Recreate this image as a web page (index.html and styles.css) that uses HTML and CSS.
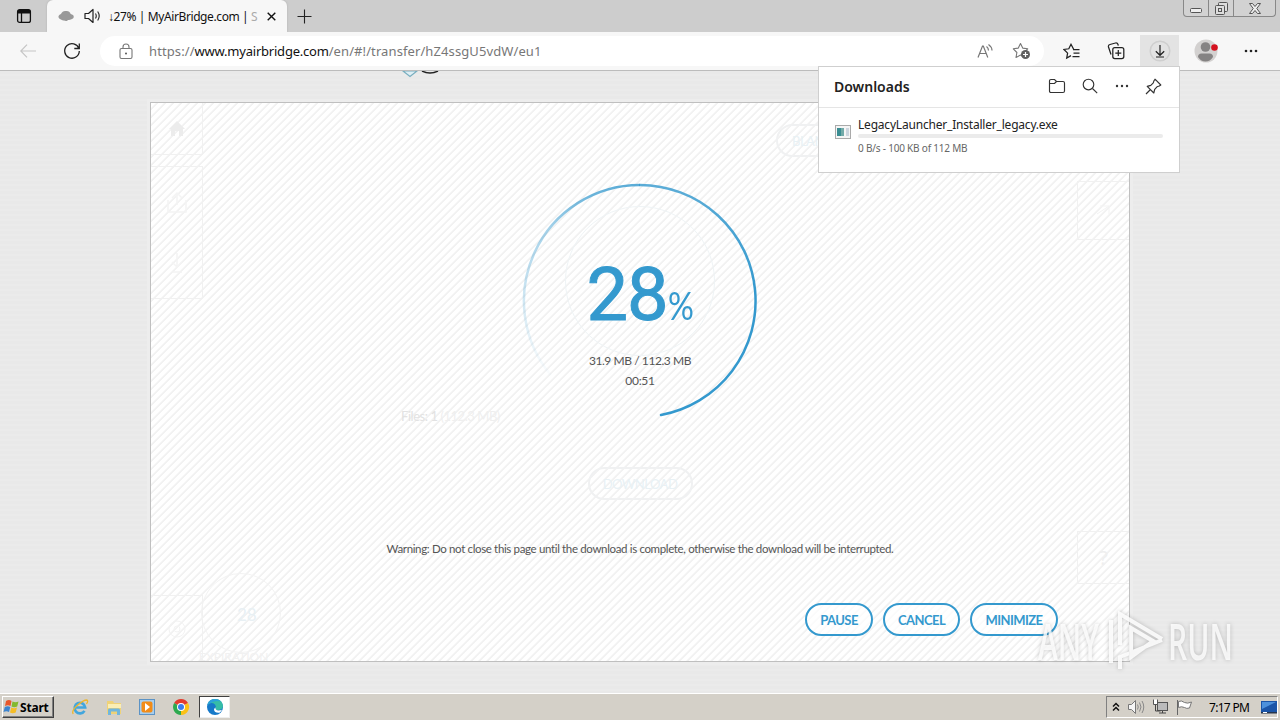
FILE: index.html
```html
<!DOCTYPE html>
<html lang="en">
<head>
  <meta charset="UTF-8">
  <title>MyAirBridge.com</title>
  <link rel="stylesheet" href="styles.css">
</head>
<body>
  <div class="screen">
    <!-- Tab strip -->
    <div class="tab-strip">
      <div class="tab-menu">
        <svg width="16" height="16" viewBox="0 0 16 16"><rect x="1.6" y="1.6" width="12.8" height="12.8" rx="2" fill="none" stroke="#111" stroke-width="1.3"/><path d="M2 2h12v3.5H2z" fill="#111"/><path d="M5.5 5v9" stroke="#111" stroke-width="1.3"/></svg>
      </div>
      <div class="tab">
        <svg class="cloud" width="16" height="12" viewBox="0 0 16 12"><path d="M3 9.5C-.5 8.5-.3 5 3 4c1-2.500 3-3.500 5-3 2-.4 4 .8 4.700 3 3.500.6 4.300 4 .8 5.300-2 .8-3.500.5-4 1.200-1 .8-2.500.5-3.500 0C5 10.500 4 10.300 3 9.500z" fill="#999"/></svg>
        <svg class="sound" width="17" height="16" viewBox="0 0 17 16"><path d="M1 5.500h3.500L9 1.500v13l-4.500-4H1z" fill="none" stroke="#222" stroke-width="1.200" stroke-linejoin="round"/><path d="M11.500 5.500q1.500 2.500 0 5M13.700 3.500q3 4.500 0 9" fill="none" stroke="#222" stroke-width="1.100"/></svg>
        <span class="tab-title">↓27% | MyAirBridge.com | <i>S</i></span>
        <svg class="tab-close" width="9" height="9" viewBox="0 0 9 9"><path d="M.7.7l7.600 7.600M8.300.7L.7 8.300" stroke="#111" stroke-width="1.400"/></svg>
      </div>
      <svg class="new-tab" width="15" height="15" viewBox="0 0 15 15"><path d="M7.500.5v14M.5 7.500h14" stroke="#222" stroke-width="1.100"/></svg>
      <div class="window-buttons">
        <span class="win min"><svg width="12" height="5" viewBox="0 0 12 5"><rect x=".5" y=".5" width="11" height="4" rx="1" fill="#eee" stroke="#555"/></svg></span>
        <span class="win max"><svg width="13" height="13" viewBox="0 0 13 13" fill="#ddd" stroke="#555"><rect x="3.500" y=".5" width="9" height="9" rx="1"/><rect x=".5" y="3.500" width="9" height="9" rx="1"/><rect x="3.500" y="6.500" width="3" height="3"/></svg></span>
        <span class="win close"><svg width="12" height="11" viewBox="0 0 12 11"><path d="M.5.500h3L6 3.500 8.500.5h3L7.800 5.500l3.700 5h-3L6 7.500l-2.500 3h-3l3.700-5z" fill="#eee" stroke="#555"/></svg></span>
      </div>
    </div>

    <!-- Toolbar -->
    <div class="toolbar">
      <svg class="back" width="16" height="14" viewBox="0 0 16 14"><path d="M7 .7L.8 7 7 13.300M1 7h15" fill="none" stroke="#c5c5c5" stroke-width="1.200"/></svg>
      <svg class="reload" width="18" height="18" viewBox="0 0 18 18"><path d="M15.900 6.500A7.300 7.300 0 1 0 16.300 9M16.300 1.500v5h-5" fill="none" stroke="#222" stroke-width="1.300"/></svg>
      <div class="address">
        <svg width="14" height="17" viewBox="0 0 14 17"><rect x="1" y="5.500" width="12" height="10" rx="1.500" fill="none" stroke="#777" stroke-width="1.100"/><path d="M4 5.500V4a3 3 0 0 1 6 0v1.500" fill="none" stroke="#777" stroke-width="1.100"/><circle cx="7" cy="10.500" r="1" fill="#555"/></svg>
        <span class="url"><span class="scheme">https://</span><b>www.myairbridge.com</b><span class="path">/en/#!/transfer/hZ4ssgU5vdW/eu1</span></span>
        <svg class="read" width="17" height="16" viewBox="0 0 17 16" fill="none" stroke="#777" stroke-width="1.200"><path d="M1 14.500L5.500 3h.8l4.500 11.500M2.800 10.500h6.500M9.500 3.500q2 1.500 2 4M11.500 1.500q3.500 2.500 3.500 6"/></svg>
        <svg class="star" width="19" height="18" viewBox="0 0 19 18"><path d="M8.500 1.500l2.200 4.600 5 .7-3.500 3.600.8 5-4.500-2.300L4 15.500l.9-5L1.300 6.800l5-.7z" fill="none" stroke="#777" stroke-width="1.100" stroke-linejoin="round"/><circle cx="13.500" cy="12.500" r="4.500" fill="#606060"/><path d="M13.500 10v5M11 12.500h5" stroke="#fff" stroke-width="1.200"/></svg>
      </div>
      <div class="tools">
        <svg width="18" height="17" viewBox="0 0 18 17" fill="none" stroke="#222" stroke-width="1.250"><path d="M15 6.500h-4.200L8 1.300 5.800 5.800l-4.800.7 3.600 3.600-.9 5 4.300-2.500M10 6.500h6.500M10.500 10h6M9.500 13.500h7"/></svg>
        <svg width="18" height="18" viewBox="0 0 18 18" fill="none" stroke="#222" stroke-width="1.250"><path d="M4 12.500L1.500 5q-.5-2 1.500-2.500L8.500 1q2-.3 2.500 1.500l.3 1.200"/><rect x="5.800" y="5.500" width="11" height="11" rx="2"/><path d="M11.300 8v6M8.300 11h6"/></svg>
        <span class="download-button"><svg width="22" height="22" viewBox="0 0 22 22"><circle cx="11" cy="11" r="9.800" fill="none" stroke="#cfcfcf" stroke-width="1.500"/><path d="M11 5v10M6.800 11.200L11 15.300l4.200-4.100M7 17h8" fill="none" stroke="#222" stroke-width="1.200"/></svg></span>
        <svg class="avatar" width="24" height="24" viewBox="0 0 24 24"><circle cx="12" cy="12" r="11.500" fill="#d3d1d0"/><circle cx="11.500" cy="8" r="4.800" fill="#858383"/><path d="M4 18q0-3.500 3.500-3.500h8q3.500 0 3.500 3.500-3 4.500-7.500 4.500T4 18z" fill="#858383"/><circle cx="20.500" cy="8.500" r="3.300" fill="#d4111f"/></svg>
        <svg width="14" height="4" viewBox="0 0 14 4" fill="#222"><circle cx="2" cy="2" r="1.300"/><circle cx="7" cy="2" r="1.300"/><circle cx="12" cy="2" r="1.300"/></svg>
      </div>
    </div>

    <!-- Page -->
    <div class="page">
      <svg class="site-logo" width="40" height="8" viewBox="0 0 40 8"><path d="M3 0l7 5.500L17 0z" fill="#deeef4" stroke="#78aebf" stroke-width="1.200"/><path d="M22 0q8 4 16 0" fill="none" stroke="#222" stroke-width="1.500"/></svg>
      <div class="card">
        <div class="ghost">
          <div class="side left">
            <span class="cell home"><svg width="18" height="18" viewBox="0 0 18 18"><path d="M9 1l8 8h-2v7h-4v-5H7v5H3V9H1z" fill="#ececec"/></svg></span>
            <span class="cell tools-cell">
              <svg width="22" height="24" viewBox="0 0 22 24"><path d="M2 10v12h18V10M11 3v12M6 8l5-5 5 5" fill="none" stroke="#f4f4f4" stroke-width="1.500"/></svg>
              <svg width="18" height="24" viewBox="0 0 18 24"><path d="M9 1v13M4 10l5 5 5-5M4 20h10" fill="none" stroke="#f4f4f4" stroke-width="1.500"/></svg>
            </span>
            <span class="cell help-cell"><svg width="20" height="20" viewBox="0 0 20 20"><circle cx="10" cy="10" r="8" fill="none" stroke="#f3f3f3"/><circle cx="10" cy="10" r="3" fill="none" stroke="#f3f3f3"/></svg></span>
          </div>
          <div class="ghost-main">
            <span class="plan pill">BLANK</span>
            <span class="dial"></span>
            <span class="files">Files: 1 <em>(112.3 MB)</em></span>
            <span class="get pill">DOWNLOAD</span>
            <span class="days">28</span>
            <span class="expires">EXPIRATION</span>
          </div>
          <div class="side right">
            <span class="cell share"><svg width="18" height="18" viewBox="0 0 18 18"><path d="M2 12l12-8M5 4h9v8" fill="none" stroke="#f3f3f3"/></svg></span>
            <span class="cell ask">?</span>
          </div>
        </div>

        <div class="transfer">
          <div class="progress">
            <svg class="ring" width="240" height="240" viewBox="0 0 240 240">
              <defs>
                <linearGradient id="fade" gradientUnits="userSpaceOnUse" x1="0" y1="200" x2="0" y2="4">
                  <stop offset="0" stop-color="#3499ce" stop-opacity="0"/>
                  <stop offset=".4" stop-color="#3499ce" stop-opacity=".22"/>
                  <stop offset=".78" stop-color="#3499ce" stop-opacity=".45"/>
                  <stop offset="1" stop-color="#3499ce" stop-opacity=".8"/>
                </linearGradient>
                <linearGradient id="solid" gradientUnits="userSpaceOnUse" x1="0" y1="4" x2="0" y2="110">
                  <stop offset="0" stop-color="#3499ce" stop-opacity=".8"/>
                  <stop offset="1" stop-color="#3499ce"/>
                </linearGradient>
              </defs>
              <path d="M31.100 194.600A116 116 0 0 1 120 4" fill="none" stroke="url(#fade)" stroke-width="2.500"/>
              <path d="M120 4A116 116 0 0 1 141 234" fill="none" stroke="url(#solid)" stroke-width="2.500" stroke-linecap="round"/>
            </svg>
            <div class="percent"><span class="number">28</span><span class="sign">%</span></div>
            <div class="amount">31.9 MB / 112.3 MB</div>
            <div class="time">00:51</div>
          </div>
          <p class="warning">Warning: Do not close this page until the download is complete, otherwise the download will be interrupted.</p>
          <div class="actions">
            <button class="action pause">PAUSE</button>
            <button class="action cancel">CANCEL</button>
            <button class="action minimize">MINIMIZE</button>
          </div>
        </div>
      </div>
    </div>

    <!-- Taskbar -->
    <div class="taskbar">
      <div class="start">
        <svg width="17" height="16" viewBox="0 0 17 16"><path d="M3 2q3-2 5.500 0L7.500 7Q5 5.500 2 7z" fill="#e8572b"/><path d="M9.500 2.500q3 1.500 6 0l-1.300 5q-3 1.500-5.700 0z" fill="#83b92f"/><path d="M1.800 8q3-1.500 5.500 0l-1.300 5q-2.500-1.700-5.500 0z" fill="#3c84cf"/><path d="M8.300 8.500q3 1.500 5.700 0l-1.300 5q-3 1.500-5.700 0z" fill="#f5bd27"/></svg>
        <span>Start</span>
      </div>
      <div class="quick">
        <svg width="18" height="18" viewBox="0 0 18 18"><path d="M4 9.500h10.200A5.300 5.300 0 1 0 13.500 12.800" fill="none" stroke="#42a6dd" stroke-width="2.600"/><path d="M2.200 16q-2-3 4-8.500T16 2q1.500 1-.5 4" fill="none" stroke="#eeb62b" stroke-width="1.300"/></svg>
        <svg width="18" height="18" viewBox="0 0 18 18"><path d="M2 3h6l1 2h7v11H2z" fill="#efd277"/><path d="M3 6h13v4H3z" fill="#fbeeb4"/><path d="M3 17v-5q0-1.500 1.500-1.500h9q1.500 0 1.500 1.500v5h-3v-3.500H6V17z" fill="#71b6dd"/></svg>
        <svg width="18" height="18" viewBox="0 0 18 18"><rect x="1.500" y="1.500" width="15" height="15" fill="#a8ceed" stroke="#5c93c5"/><rect x="3.500" y="3.500" width="11" height="11" rx="2" fill="#f28c18"/><path d="M7 5l5 4-5 4z" fill="#fff"/></svg>
        <svg width="18" height="18" viewBox="0 0 18 18"><path d="M9 9L2.100 5A8 8 0 0 1 16 5z" fill="#e33b2e"/><path d="M9 9l7-4a8 8 0 0 1-7 12z" fill="#fbc116"/><path d="M9 9v8A8 8 0 0 1 2.100 5z" fill="#2da94f"/><circle cx="9" cy="9" r="4" fill="#fff"/><circle cx="9" cy="9" r="3" fill="#3b7ded"/></svg>
      </div>
      <div class="task-active">
        <svg width="18" height="18" viewBox="0 0 18 18"><circle cx="9" cy="9" r="8" fill="#1679c9"/><path d="M1.300 7Q3 1 9 1q7 0 8 7-.5 4-5 4-3 0-2.500-2 1-1.500-.5-3.500Q5.500 3.500 1.300 7z" fill="#36bda6"/><path d="M1.300 7Q3 1 9 1q4 0 6 2.500Q9 1.500 1.300 7z" fill="#2ba1dc"/><path d="M9.500 9.500q-.5 2.500 3 3 2 0 3.500-.8-1 2-2.500 3-5 .5-5.500-3 0-1.300 1.500-2.200z" fill="#fff"/></svg>
      </div>
      <div class="tray">
        <svg width="8" height="10" viewBox="0 0 8 10"><path d="M1 4.500l3-3 3 3M1 8.500l3-3 3 3" fill="none" stroke="#111" stroke-width="1.500"/></svg>
        <svg width="18" height="16" viewBox="0 0 18 16"><path d="M1.500 5.500h3l4-4v13l-4-4h-3z" fill="#f5f5f5" stroke="#777"/><path d="M10.500 5.500q1.500 2.500 0 5M12.500 3.500q3 4.500 0 9M15 2q3.500 6 0 12" fill="none" stroke="#888"/></svg>
        <svg width="17" height="16" viewBox="0 0 17 16"><rect x="5.500" y="3.500" width="10" height="8" fill="#bbb" stroke="#555"/><path d="M3.500 5v7h5M7 14h7M10.500 12v2" fill="none" stroke="#444"/><path d="M1.500.5v5h4v-5" fill="#fff" stroke="#555"/></svg>
        <svg width="18" height="16" viewBox="0 0 18 16"><path d="M1.500 1v15" stroke="#666"/><path d="M2.500 2.500q3-1.500 6 1 3 1.500 7-.5l-2 6q-3 1-5-.5-3-1.500-6 0z" fill="#fff" stroke="#777"/></svg>
        <span class="clock">7:17 PM</span>
        <svg class="desktop" width="16" height="13" viewBox="0 0 16 13"><path d="M0 0h16v11H0z" fill="#1b55a8"/><path d="M1 1h14L1 8z" fill="#4d91dc"/><path d="M0 11h16v1.500H0z" fill="#26354d"/><path d="M2 11h4v1H2z" fill="#fff"/></svg>
      </div>
    </div>

    <!-- Downloads flyout -->
    <div class="downloads">
      <div class="downloads-head">
        <h2>Downloads</h2>
        <svg width="18" height="16" viewBox="0 0 18 16" fill="none" stroke="#333" stroke-width="1.150"><path d="M1.500 3q0-1.500 1.500-1.500h3.500L8.500 3.500H15q1.500 0 1.500 1.500v8q0 1.500-1.500 1.500H3q-1.500 0-1.500-1.500zM1.500 5.500h5l2-2"/></svg>
        <svg width="16" height="16" viewBox="0 0 16 16" fill="none" stroke="#333" stroke-width="1.150"><circle cx="6.500" cy="6.500" r="5.300"/><path d="M10.500 10.500l4.700 4.700"/></svg>
        <svg width="14" height="4" viewBox="0 0 14 4" fill="#333"><circle cx="2" cy="2" r="1.200"/><circle cx="7" cy="2" r="1.200"/><circle cx="12" cy="2" r="1.200"/></svg>
        <svg width="17" height="17" viewBox="0 0 17 17" fill="none" stroke="#333" stroke-width="1.150" stroke-linejoin="round"><path d="M10 1.200l5.800 5.800-1.500 1-2.300.8-2.300 2.500-.9 3.700L2.200 8.400l3.600-1 2.500-2.500.7-2.200zM5.500 11.500L1 16"/></svg>
      </div>
      <div class="download-item">
        <svg width="16" height="14" viewBox="0 0 16 14"><rect x=".5" y=".5" width="15" height="13" fill="#f5f5f5" stroke="#aaa"/><path d="M2 3h7v8H2z" fill="#3a8d92"/><path d="M6 3h3v8H6z" fill="#72aaa8"/><path d="M11 3h3v8h-3z" fill="#ccd5de"/></svg>
        <div class="download-info">
          <div class="file-name">LegacyLauncher_Installer_legacy.exe</div>
          <div class="bar"></div>
          <div class="speed">0 B/s - 100 KB of 112 MB</div>
        </div>
      </div>
    </div>

    <!-- Watermark -->
    <div class="watermark">
      <span class="any">ANY</span>
      <svg width="60" height="64" viewBox="0 0 60 64"><path d="M5 11v43M14 36V5l42 25M14 60V48l42-17M25 19v29l22-16z" fill="none" stroke="#fff" stroke-opacity=".85" stroke-width="4"/></svg>
      <span class="run">RUN</span>
    </div>
  </div>
</body>
</html>
```
FILE: styles.css
```css
* {
  box-sizing: border-box;
}

body {
  margin: 0;
  font-family: "Noto Sans", "Open Sans", sans-serif;
  overflow: hidden;
}

svg {
  display: block;
  flex-shrink: 0;
}

.screen {
  position: relative;
  display: flex;
  flex-direction: column;
  width: 1280px;
  height: 720px;
}

/* Tab strip */
.tab-strip {
  display: flex;
  align-items: center;
  height: 32px;
  background: #cdcdcd;
}

.tab-menu {
  width: 47px;
  padding-left: 16px;
}

.tab {
  display: flex;
  align-items: center;
  width: 240px;
  height: 32px;
  padding-left: 11px;
  background: #f7f7f7;
  border-radius: 6px 6px 0 0;
  box-shadow: 0 0 2px #aaa;
}

.sound {
  margin-left: 10px;
}

.tab-title {
  width: 150px;
  margin-left: 7px;
  font-size: 12px;
  letter-spacing: -0.400px;
  color: #111;
  white-space: nowrap;
}

.tab-title i {
  font-style: normal;
  color: #aaa;
}

.tab-close {
  margin-left: 9px;
}

.new-tab {
  margin-left: 10px;
}

.window-buttons {
  display: flex;
  align-self: flex-start;
  height: 17px;
  margin-left: auto;
  margin-right: 4px;
  border: 1px solid #888;
  border-top: none;
  border-radius: 0 0 4px 4px;
  background: #d2d2d2;
}

.win {
  display: flex;
  justify-content: center;
  align-items: center;
  width: 25px;
  border-right: 1px solid #888;
}

.min {
  padding-top: 5px;
}

.close {
  width: 41px;
  border-right: none;
}

/* Toolbar */
.toolbar {
  display: flex;
  align-items: center;
  height: 39px;
  background: #f7f7f7;
  border-bottom: 1px solid #bcbcbc;
}

.back {
  margin-left: 20px;
}

.reload {
  margin-left: 27px;
}

.address {
  display: flex;
  align-items: center;
  width: 944px;
  height: 30px;
  margin-left: 19px;
  padding: 0 13px 0 19px;
  background: #fff;
  border-radius: 15px;
}

.url {
  margin-left: 16px;
  font-size: 13px;
  letter-spacing: 0.1px;
  color: #777;
}

.url b {
  font-weight: normal;
  letter-spacing: -0.220px;
  color: #111;
}

.read {
  margin-left: auto;
}

.star {
  margin-left: 18px;
}

.tools {
  display: flex;
  align-items: center;
  margin-left: 19px;
  gap: 26px;
}

.download-button {
  display: flex;
  justify-content: center;
  align-items: center;
  width: 39px;
  height: 32px;
  margin-left: -11px;
  margin-right: -11px;
  background: #e3e3e3;
}

/* Page */
.page {
  position: relative;
  flex: 1;
  padding-top: 31px;
  background: repeating-linear-gradient(#e9e9e9 0 3px, #ebebeb 3px 5px);
  overflow: hidden;
}

.site-logo {
  position: absolute;
  left: 400px;
  top: 0;
}

.card {
  position: relative;
  width: 980px;
  height: 560px;
  margin: 0 auto;
  border: 1px solid #bfbfbf;
  background: repeating-linear-gradient(135deg, #fff 0 3px, #f2f2f2 4px 5.400px, #fff 5.657px);
  box-shadow: 0 0 0 3px #ededed;
}

/* Faded page below the transfer screen */
.ghost {
  position: absolute;
  inset: 0;
  display: flex;
  color: #efefef;
}

.side {
  display: flex;
  flex-direction: column;
  width: 52px;
}

.cell {
  display: flex;
  flex-direction: column;
  align-items: center;
  justify-content: center;
  border: 1px solid #f1f1f1;
  border-left: none;
}

.home {
  height: 52px;
  border-top: none;
}

.tools-cell {
  height: 133px;
  margin-top: 11px;
  gap: 38px;
}

.help-cell {
  height: 66px;
  margin-top: auto;
  border-bottom: none;
}

.ghost-main {
  position: relative;
  flex: 1;
  display: flex;
  flex-direction: column;
  align-items: center;
  font-family: Lato, sans-serif;
}

.pill {
  display: flex;
  align-items: center;
  justify-content: center;
  height: 33px;
  border: 2px solid #f0f1f2;
  border-radius: 17px;
  font-size: 13px;
  letter-spacing: -0.500px;
  color: #e8f1f5;
}

.plan {
  align-self: flex-end;
  justify-content: flex-start;
  width: 82px;
  margin-top: 21px;
  margin-right: 219px;
  padding-left: 14px;
}

.dial {
  width: 150px;
  height: 150px;
  margin-top: 49px;
  border: 1px solid #eff4f6;
  border-radius: 50%;
}

.files {
  align-self: flex-start;
  margin: 52px 0 0 198px;
  font-size: 13px;
  line-height: 17px;
  letter-spacing: -0.450px;
  color: #e2e2e2;
}

.files em {
  font-style: normal;
  color: #efefef;
}

.get {
  width: 105px;
  margin-top: 42px;
}

.days {
  position: absolute;
  left: -2px;
  top: 470px;
  width: 80px;
  height: 80px;
  padding: 31px 0 0 35px;
  border: 1px solid #f3f3f3;
  border-radius: 50%;
  font-size: 17px;
  line-height: 20px;
  color: #e8f0f4;
}

.expires {
  position: absolute;
  left: -4px;
  bottom: -3px;
  font-size: 12px;
  color: #f1f1f1;
}

.right {
  padding-top: 78px;
}

.right .cell {
  border: 1px solid #f1f1f1;
  border-right: none;
}

.share {
  height: 59px;
}

.ask {
  height: 53px;
  margin-top: auto;
  margin-bottom: 77px;
  font-size: 20px;
}

/* Transfer screen */
.transfer {
  position: relative;
  display: flex;
  flex-direction: column;
  align-items: center;
  height: 100%;
  padding-top: 77px;
  font-family: Lato, sans-serif;
  color: #555;
}

.progress {
  position: relative;
  display: flex;
  flex-direction: column;
  align-items: center;
  width: 240px;
  height: 240px;
}

.ring {
  position: absolute;
  left: 0;
  top: 1px;
}

.percent {
  display: flex;
  align-items: baseline;
  height: 92px;
  margin-top: 69px;
  line-height: 92px;
  color: #3499ce;
}

.number {
  font-family: Roboto, sans-serif;
  font-size: 74px;
  letter-spacing: -1px;
  -webkit-text-stroke: 1px #3499ce;
}

.sign {
  margin-left: 0;
  font-size: 38px;
  transform: scaleX(.85);
  transform-origin: left;
  width: 26px;
}

.amount {
  margin-top: 10px;
  font-size: 12px;
  line-height: 20px;
  letter-spacing: -0.430px;
}

.time {
  font-size: 12px;
  line-height: 20px;
  letter-spacing: -0.300px;
}

.warning {
  margin: 120px 0 0;
  font-size: 11.500px;
  line-height: 18px;
  white-space: nowrap;
  letter-spacing: -0.350px;
}

.actions {
  display: flex;
  align-self: flex-end;
  gap: 10px;
  margin: 45px 71px 0 0;
}

.action {
  height: 33px;
  padding: 0;
  border: 2px solid #3499ce;
  border-radius: 17px;
  background: rgba(255, 255, 255, 0.7);
  color: #3499ce;
  font-family: Lato, sans-serif;
  font-size: 13px;
  font-weight: bold;
  letter-spacing: -0.550px;
}

.pause {
  width: 68px;
}

.cancel {
  width: 77px;
}

.minimize {
  width: 88px;
}

/* Taskbar */
.taskbar {
  display: flex;
  align-items: center;
  height: 27px;
  padding: 0 2px;
  background: #d4d0c8;
  border-top: 1px solid #fff;
  box-shadow: 0 -1px 0 #dcdad5;
}

.start {
  display: flex;
  align-items: center;
  width: 52px;
  height: 22px;
  border: 1px solid;
  border-color: #fff #404040 #404040 #fff;
  box-shadow: inset -1px -1px 0 #808080;
  font-family: "Noto Sans", sans-serif;
  font-size: 12px;
  font-weight: bold;
  letter-spacing: -0.200px;
}

.quick {
  display: flex;
  gap: 15.700px;
  margin-left: 17px;
}

.task-active {
  display: flex;
  justify-content: center;
  align-items: center;
  width: 31px;
  height: 22px;
  margin-left: 9px;
  background: #fff;
  border: 1px solid;
  border-color: #404040 #eee #eee #404040;
}

.tray {
  display: flex;
  align-items: center;
  width: 172px;
  height: 22px;
  margin-left: auto;
  padding-left: 5px;
  border: 1px solid;
  border-color: #808080 #fff #fff #808080;
}

.tray svg + svg {
  margin-left: 7px;
}

.clock {
  margin-left: 15px;
  font-size: 12px;
  letter-spacing: -0.700px;
  white-space: nowrap;
}

.desktop {
  margin-left: auto;
}

/* Downloads flyout */
.downloads {
  position: absolute;
  left: 818px;
  top: 66px;
  width: 362px;
  height: 107px;
  background: #fff;
  border: 1px solid #cfcfcf;
}

.downloads-head {
  display: flex;
  align-items: center;
  height: 41px;
  padding: 0 17px 2px 15px;
  border-bottom: 1px solid #e5e5e5;
}

.downloads-head h2 {
  margin: 0 auto 0 0;
  font-size: 14px;
  font-weight: 600;
  color: #222;
}

.downloads-head svg + svg {
  margin-left: 16.500px;
}

.download-item {
  display: flex;
  padding: 8px 16px 0 16px;
}

.download-item > svg {
  margin-top: 9px;
}

.download-info {
  flex: 1;
  margin-left: 7px;
}

.file-name {
  font-size: 12px;
  line-height: 18px;
  letter-spacing: -0.200px;
  color: #222;
}

.bar {
  height: 4px;
  border-radius: 2px;
  background: #ebebeb;
}

.speed {
  margin-top: 4px;
  font-size: 10px;
  line-height: 13px;
  letter-spacing: -0.200px;
  color: #666;
}

/* Watermark */
.watermark {
  position: absolute;
  left: 1038px;
  top: 609px;
  display: flex;
  align-items: center;
  width: 196px;
  height: 64px;
  color: rgba(255, 255, 255, 0.8);
  font-family: "Open Sans", sans-serif;
  filter: drop-shadow(0 0 2px rgba(0, 0, 0, 0.25));
}

.watermark span {
  flex-shrink: 0;
  width: 65px;
  font-size: 50px;
  font-weight: 600;
  line-height: 60px;
  transform: scaleX(.6);
  transform-origin: left;
}

.watermark svg {
  margin-left: 3px;
}

.watermark .run {
  margin-left: 2px;
}
```
